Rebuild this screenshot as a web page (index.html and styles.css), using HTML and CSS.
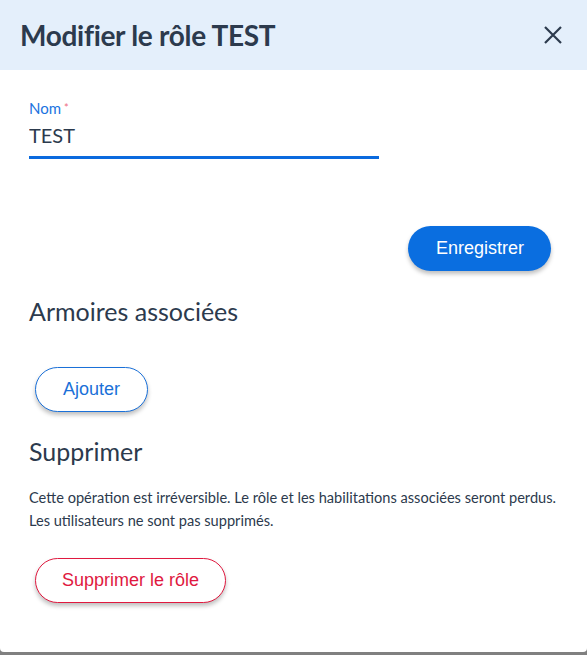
FILE: index.html
```html
<!DOCTYPE html>
<html lang="fr">
<head>
<meta charset="UTF-8">
<meta name="viewport" content="width=device-width, initial-scale=1.0">
<title>Modifier le rôle</title>
<link rel="stylesheet" href="styles.css">
</head>
<body>
<div class="dialog">
    <div class="dialog-header">
        <h2>Modifier le rôle TEST</h2>
        <span class="close">
            <svg width="18" height="18" viewBox="0 0 18 18"><path d="M1 1L17 17M17 1L1 17" stroke="#2c3a4d" stroke-width="2.2" fill="none"/></svg>
        </span>
    </div>

    <div class="dialog-body">
        <div class="field">
            <label for="nom">Nom<span class="required">*</span></label>
            <input type="text" id="nom" value="TEST">
        </div>

        <div class="actions">
            <button class="btn btn-primary">Enregistrer</button>
        </div>

        <h3>Armoires associées</h3>
        <button class="btn btn-outline">Ajouter</button>

        <h3 class="delete-title">Supprimer</h3>
        <p class="warning">Cette opération est irréversible. Le rôle et les habilitations associées seront perdus.<br>Les utilisateurs ne sont pas supprimés.</p>
        <button class="btn btn-danger">Supprimer le rôle</button>
    </div>
</div>
</body>
</html>
```

FILE: styles.css
```css
html {
    background-color: #808080;
}

body {
    margin: 0;
    font-family: Lato, "Open Sans", sans-serif;
    color: #2c3a4d;
}

.dialog {
    height: 652px;
    background-color: #fff;
    border-radius: 0 0 4px 4px;
    overflow: hidden;
}

.dialog-header {
    height: 70px;
    background-color: #e4effb;
    display: flex;
    align-items: center;
    justify-content: space-between;
    padding: 0 25px 0 20px;
}

.dialog-header h2 {
    margin: 0;
    font-size: 28px;
    font-weight: 700;
    letter-spacing: -0.3px;
}

.close {
    display: flex;
    cursor: pointer;
}

.dialog-body {
    padding: 29px 30px 0 29px;
}

.field {
    width: 350px;
}

.field label {
    display: block;
    font-size: 15px;
    color: #1a73e0;
    line-height: 18px;
}

.required {
    color: #ee6a80;
    font-size: 11px;
    vertical-align: top;
    margin-left: 3px;
}

.field input {
    display: block;
    width: 100%;
    box-sizing: border-box;
    border: none;
    border-bottom: 3px solid #0a6ade;
    font-family: Lato, sans-serif;
    font-size: 20px;
    color: #2c3a4d;
    padding: 6px 0 9px 0;
    outline: none;
}

.actions {
    display: flex;
    justify-content: flex-end;
    margin-top: 67px;
    padding-right: 6px;
}

.btn {
    font-family: "Liberation Sans", Arial, sans-serif;
    font-size: 18px;
    height: 45px;
    border-radius: 23px;
    padding: 0 28px;
    cursor: pointer;
    box-shadow: 0 3px 4px rgba(0,0,0,0.25);
}

.btn-primary {
    background-color: #0a6ee0;
    color: #fff;
    border: none;
    width: 143px;
}

.btn-outline {
    background-color: #fff;
    color: #1a70d8;
    border: 1px solid #1a70d8;
    width: 113px;
    margin-left: 6px;
    padding: 0;
}

.btn-danger {
    background-color: #fff;
    color: #e0193f;
    border: 1px solid #e0193f;
    width: 191px;
    margin-left: 6px;
    padding: 0;
}

h3 {
    font-size: 25px;
    font-weight: 400;
    margin: 25px 0 41px 0;
    line-height: 30px;
}

.delete-title {
    margin: 24px 0 20px 0;
}

.warning {
    font-size: 14.6px;
    line-height: 23px;
    margin: 0 0 26px 0;
}
```
